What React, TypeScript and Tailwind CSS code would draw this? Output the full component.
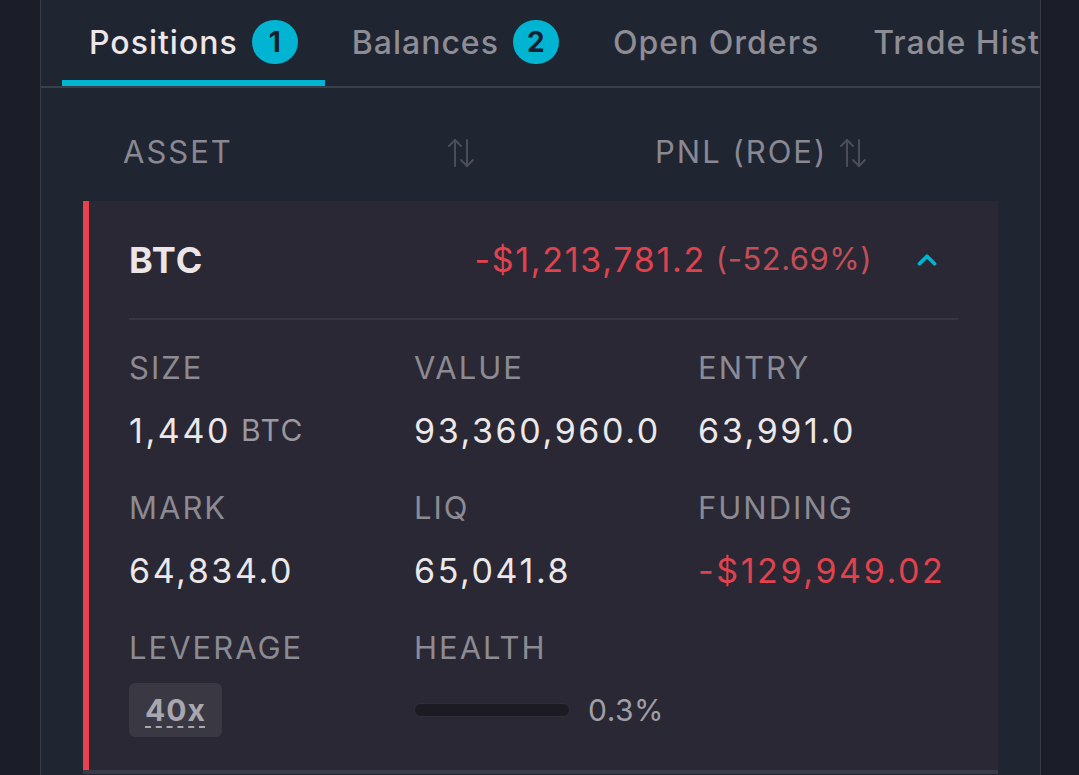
import { ChevronUp } from "lucide-react";

const tabs = [
  { label: "Positions", count: 1, active: true },
  { label: "Balances", count: 2, active: false },
  { label: "Open Orders", count: 0, active: false },
  { label: "Trade History", count: 0, active: false },
];

function SortIcon() {
  return (
    <svg width="28" height="30" viewBox="0 0 28 30" fill="none" stroke="#4b4d5a" strokeWidth="2" strokeLinecap="round" strokeLinejoin="round">
      <path d="M8 28V2" />
      <path d="M2 8l6-6 6 6" />
      <path d="M20 2v26" />
      <path d="M14 22l6 6 6-6" />
    </svg>
  );
}

function Cell({ label, children }: { label: string; children: React.ReactNode }) {
  return (
    <div className="flex flex-col">
      <div className="h-[40px] leading-[40px] text-[31px] tracking-[2px] text-[#8c8a93]">{label}</div>
      <div className="mt-[22px] h-[40px] flex items-center text-[34px] tracking-[2.6px] text-[#ece8ea] whitespace-nowrap">{children}</div>
    </div>
  );
}

export default function App() {
  return (
    <div
      className="h-[775px] w-[1079px] overflow-hidden bg-[#1b1e29] flex"
      style={{ fontFamily: "Inter, 'Noto Sans', sans-serif" }}
    >
      <div className="ml-[40px] w-[1001px] h-full bg-[#1f2531] border-x border-[#383c48] overflow-hidden">
        {/* Tabs */}
        <div className="flex pl-[21px] h-[86px] whitespace-nowrap">
          {tabs.map((t) => (
            <div
              key={t.label}
              className={`flex items-center gap-[14px] px-[27px] h-full border-b-[6px] ${
                t.active ? "border-[#00b4d2] text-[#ece6e8]" : "border-transparent text-[#8e8c95]"
              }`}
            >
              <span className="text-[32px] font-medium tracking-[1px] pt-[5px]">{t.label}</span>
              {t.count > 0 && (
                <span className="mt-[4px] w-[46px] h-[44px] rounded-full bg-[#00b4d2] text-[#15202c] text-[28px] font-bold flex items-center justify-center">
                  {t.count}
                </span>
              )}
            </div>
          ))}
        </div>
        <div className="h-[2px] bg-[#3b3f4b]" />

        <div className="px-[42px]">
          {/* Column header */}
          <div className="h-[113px] pt-[16px] flex items-center pl-[40px] text-[31px] tracking-[2px] text-[#8a8892]">
            <div className="w-[352px] flex items-center justify-between">
              <span>ASSET</span>
              <SortIcon />
            </div>
            <div className="ml-[180px] flex items-center gap-[12px]">
              <span>PNL (ROE)</span>
              <SortIcon />
            </div>
          </div>

          {/* Position card */}
          <div className="bg-[#292834] border-l-[6px] border-[#e8424c] pl-[40px] pr-[40px]">
            <div className="h-[117px] flex items-center">
              <span className="text-[36px] font-bold tracking-[1px] text-[#ebe5e8]">BTC</span>
              <div className="ml-auto flex items-center">
                <span className="text-[34px] tracking-[1.7px] text-[#e0434e]">-$1,213,781.2</span>
                <span className="ml-[10px] text-[31px] tracking-[0.5px] text-[#c24e58]">(-52.69%)</span>
              </div>
              <ChevronUp className="ml-[40px] mr-[16px] text-[#00b4d2]" size={30} strokeWidth={3} />
            </div>
            <div className="h-[2px] bg-[#363542]" />

            <div className="grid grid-cols-[285px_284px_1fr] gap-y-[38px] pt-[28px] pb-[40px]">
              <Cell label="SIZE">
                1,440<span className="ml-[10px] text-[30px] tracking-[1.5px] text-[#9a98a0]">BTC</span>
              </Cell>
              <Cell label="VALUE">93,360,960.0</Cell>
              <Cell label="ENTRY">63,991.0</Cell>
              <Cell label="MARK">64,834.0</Cell>
              <Cell label="LIQ">65,041.8</Cell>
              <Cell label="FUNDING">
                <span className="text-[#e0434e]">-$129,949.02</span>
              </Cell>
              <Cell label="LEVERAGE">
                <span className="h-[54px] px-[16px] rounded-[6px] bg-[#393843] flex items-center text-[#a8a6ae] text-[30px] font-bold tracking-[1px]">
                  <span className="underline decoration-dashed decoration-2 underline-offset-[6px]">40x</span>
                </span>
              </Cell>
              <Cell label="HEALTH">
                <span className="flex items-center gap-[18px]">
                  <span className="block w-[156px] h-[14px] rounded-full bg-[#1c1b23] border border-[#302f39]" />
                  <span className="text-[30px] tracking-[0.5px] text-[#a09ea6]">0.3%</span>
                </span>
              </Cell>
              <div />
            </div>
          </div>
          <div className="h-[4px] bg-[#3b3a48]" />
        </div>
      </div>
    </div>
  );
}
